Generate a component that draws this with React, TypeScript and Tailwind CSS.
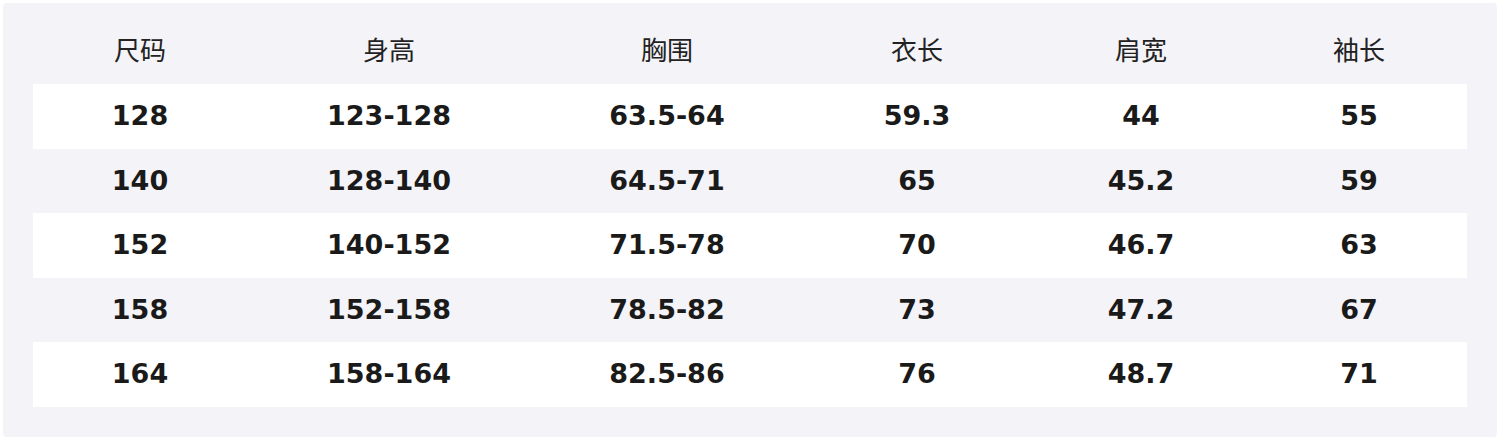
const headers = ["尺码", "身高", "胸围", "衣长", "肩宽", "袖长"];

const rows = [
  ["128", "123-128", "63.5-64", "59.3", "44", "55"],
  ["140", "128-140", "64.5-71", "65", "45.2", "59"],
  ["152", "140-152", "71.5-78", "70", "46.7", "63"],
  ["158", "152-158", "78.5-82", "73", "47.2", "67"],
  ["164", "158-164", "82.5-86", "76", "48.7", "71"],
];

const cols = "grid grid-cols-[214px_284px_272px_228px_220px_216px]";

export default function App() {
  return (
    <div className="w-[1500px] h-[441px] bg-white p-[3px]">
      <div className="h-[434px] w-[1494px] bg-[#f4f3f8] rounded-[4px] px-[30px] pt-[16px]">
        <div
          className={`${cols} h-[65px] pb-[6px] items-center text-[26px] text-[#222]`}
          style={{ fontFamily: '"Noto Sans CJK SC", "Noto Sans", sans-serif' }}
        >
          {headers.map((h) => (
            <div key={h} className="text-center">
              {h}
            </div>
          ))}
        </div>
        {rows.map((r, i) => (
          <div
            key={i}
            className={`${cols} h-[64.5px] items-center text-[27px] font-bold text-[#1a1a1a] ${
              i % 2 === 0 ? "bg-white" : ""
            }`}
            style={{ fontFamily: '"DejaVu Sans", sans-serif' }}
          >
            {r.map((c, j) => (
              <div key={j} className="text-center">
                {c}
              </div>
            ))}
          </div>
        ))}
      </div>
    </div>
  );
}
